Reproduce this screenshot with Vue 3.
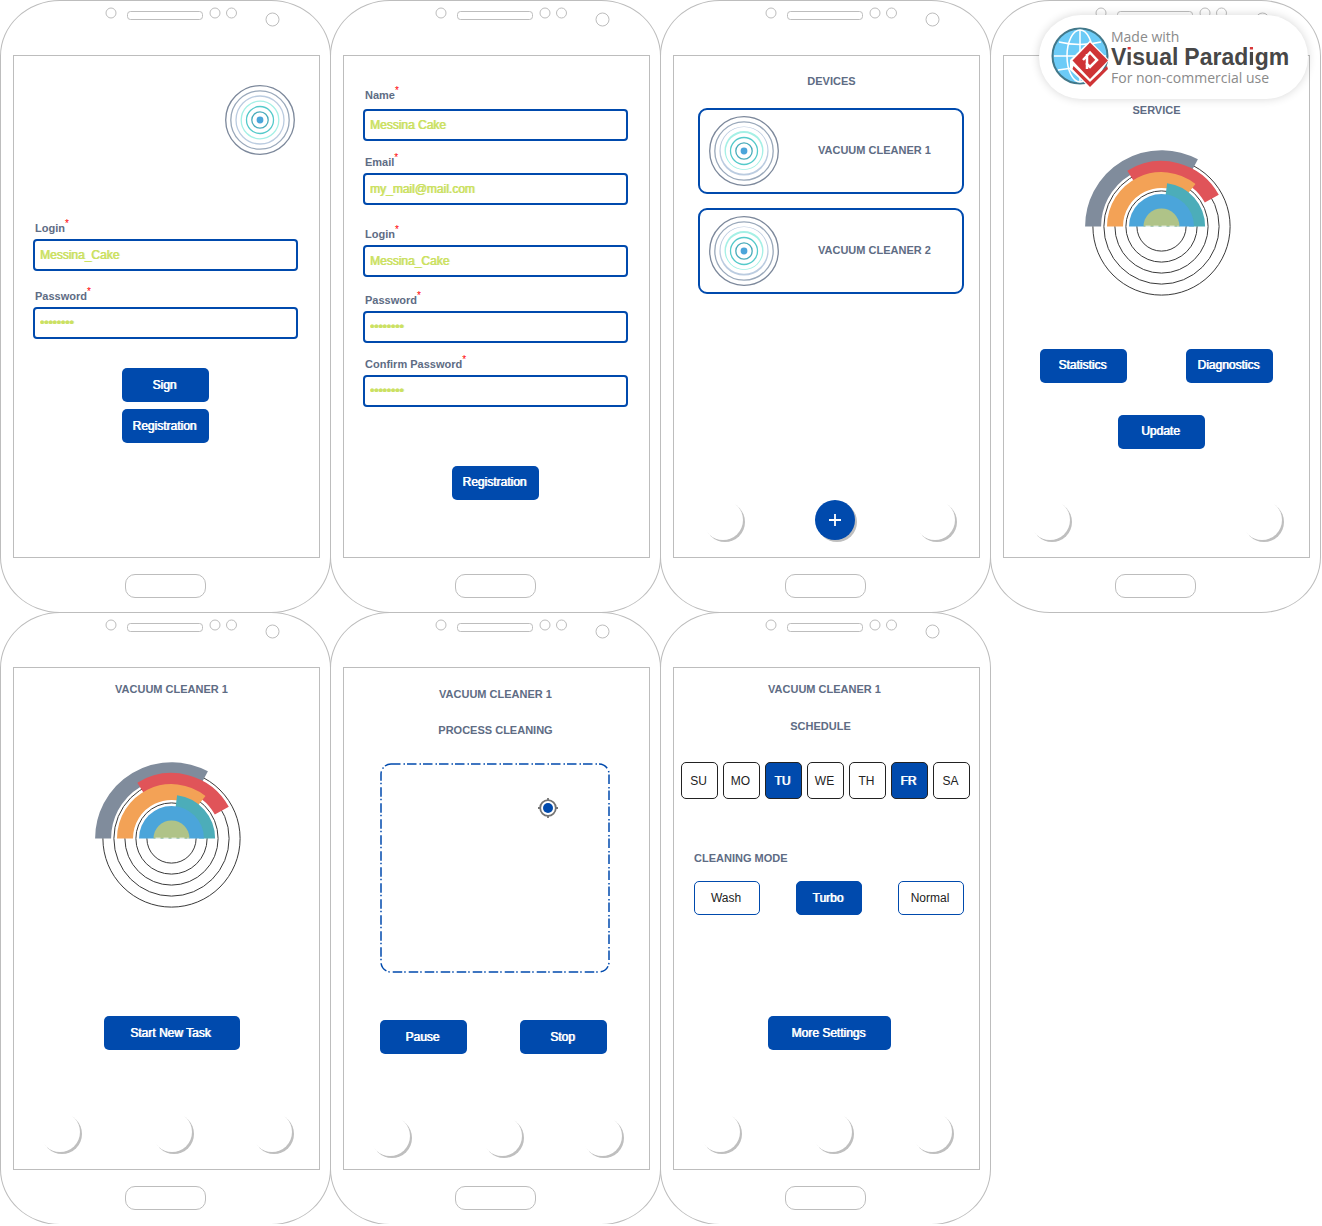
<script setup>
import { ref } from 'vue'

const signInFields = [
  { id: 'signin-login', label: 'Login', type: 'text', value: 'Messina_Cake' },
  { id: 'signin-password', label: 'Password', type: 'password', value: 'cakecake' },
]

const registrationFields = [
  { id: 'reg-name', label: 'Name', type: 'text', value: 'Messina Cake' },
  { id: 'reg-email', label: 'Email', type: 'email', value: 'my_mail@mail.com' },
  { id: 'reg-login', label: 'Login', type: 'text', value: 'Messina_Cake' },
  { id: 'reg-password', label: 'Password', type: 'password', value: 'cakecake' },
  { id: 'reg-confirm', label: 'Confirm Password', type: 'password', value: 'cakecake' },
]

const devices = ['VACUUM CLEANER 1', 'VACUUM CLEANER 2']

const phones = ['signin', 'register', 'devices', 'service', 'cleaner', 'process', 'schedule']

const days = ref([
  { name: 'SU', on: false },
  { name: 'MO', on: false },
  { name: 'TU', on: true },
  { name: 'WE', on: false },
  { name: 'TH', on: false },
  { name: 'FR', on: true },
  { name: 'SA', on: false },
])

const modes = ['Wash', 'Turbo', 'Normal']
const mode = ref('Turbo')
</script>

<template>
  <svg class="defs" width="0" height="0" aria-hidden="true">
    <symbol id="emblem" viewBox="-35 -35 70 70">
      <g fill="none" stroke-width="1.300">
        <circle r="34.300" stroke="#7c889b" />
        <circle r="29.200" stroke="#99a8ba" />
        <circle r="24" stroke="#bbcce0" />
        <circle r="18.800" stroke="#a5f0e6" />
        <circle r="13.500" stroke="#55caca" />
        <circle r="8.200" stroke="#4aacbb" />
      </g>
      <circle r="3.400" fill="#4ba5da" />
    </symbol>
    <symbol id="emblem-device" viewBox="-35 -35 70 70">
      <g fill="none" stroke-width="1.300">
        <circle r="34.300" stroke="#7c889b" />
        <circle r="29.200" stroke="#99a8ba" />
        <circle r="13.500" stroke="#55caca" />
        <circle r="8.200" stroke="#4aacbb" />
      </g>
      <path fill="#bbcce0" fill-rule="evenodd" d="M-24.600 0a24.600 24.600 0 1 0 49.200 0a24.600 24.600 0 1 0 -49.200 0M-23.400 -.700a23.400 23.400 0 1 0 46.800 0a23.400 23.400 0 1 0 -46.800 0" />
      <path fill="#a5f0e6" fill-rule="evenodd" d="M-19.500 -.600a19.500 19.500 0 1 0 39 0a19.500 19.500 0 1 0 -39 0M-18.100 .100a18.100 18.100 0 1 0 36.200 0a18.100 18.100 0 1 0 -36.200 0" />
      <circle r="3.400" fill="#4ba5da" />
    </symbol>
    <symbol id="rings" viewBox="-76.500 -76.500 154 147">
      <g fill="none" stroke="#3a3a3a" stroke-width="1">
        <circle r="68.600" />
        <circle r="57.600" />
        <circle r="46.600" />
        <circle r="35.600" />
        <circle r="24.600" />
      </g>
      <g fill="none" stroke-width="16">
        <path stroke="#808c9c" d="M-68.400 0A68.400 68.400 0 0 1 32.600 -60.100" />
        <path stroke="#e05459" d="M-30 -49A57.500 57.500 0 0 1 50.300 -27.900" />
        <path stroke="#f3a256" d="M-46.500 0A46.500 46.500 0 0 1 29 -36.300" />
        <path stroke="#4cadb9" d="M4.600 -35.300A35.600 35.600 0 0 1 35.600 0" />
      </g>
      <path fill="#4ba5da" d="M-32.500 0A32.500 32.500 0 0 1 32.500 0Z" />
      <path fill="#afc388" d="M-18 0A18 18 0 0 1 18 0Z" />
      <path stroke="#fff" stroke-dasharray="5 3" d="M-16 -.300H17" />
    </symbol>
  </svg>

  <main class="board">
    <article v-for="phone in phones" :key="phone" class="phone">
      <svg class="sensors" viewBox="0 0 329 54" aria-hidden="true">
        <g fill="#fff" stroke="#bdbdbd">
          <circle cx="110" cy="12" r="5" />
          <rect x="126.500" y="10.500" width="75" height="8" rx="3" />
          <circle cx="214" cy="12" r="5" />
          <circle cx="230.500" cy="12" r="5" />
          <circle cx="271.500" cy="18.500" r="6.500" />
        </g>
      </svg>

      <section class="screen" :class="phone">
        <template v-if="phone === 'signin'">
          <svg class="emblem"><use href="#emblem" /></svg>
          <form class="form" @submit.prevent>
            <div v-for="field in signInFields" :key="field.id" class="field">
              <label :for="field.id">{{ field.label }}<sup>*</sup></label>
              <input :id="field.id" v-model="field.value" :type="field.type" autocomplete="off" />
            </div>
            <button class="btn">Sign</button>
            <button class="btn" type="button">Registration</button>
          </form>
        </template>

        <template v-else-if="phone === 'register'">
          <form class="form" @submit.prevent>
            <div v-for="field in registrationFields" :key="field.id" class="field">
              <label :for="field.id">{{ field.label }}<sup>*</sup></label>
              <input :id="field.id" v-model="field.value" :type="field.type" autocomplete="off" />
            </div>
            <button class="btn">Registration</button>
          </form>
        </template>

        <template v-else-if="phone === 'devices'">
          <h2 class="right">DEVICES</h2>
          <div class="cards">
            <a v-for="device in devices" :key="device" class="card" href="#">
              <svg class="emblem"><use href="#emblem-device" /></svg>
              <span>{{ device }}</span>
            </a>
          </div>
          <nav class="dock">
            <button aria-label="Back"></button>
            <button class="add" aria-label="Add device">
              <svg width="12" height="12" viewBox="0 0 12 12"><path stroke="#fff" stroke-width="1.800" d="M6 0V12M0 6H12" /></svg>
            </button>
            <button aria-label="Menu"></button>
          </nav>
        </template>

        <template v-else-if="phone === 'service'">
          <h2>SERVICE</h2>
          <div class="right"><svg class="rings"><use href="#rings" /></svg></div>
          <div class="pair">
            <button class="btn">Statistics</button>
            <button class="btn">Diagnostics</button>
          </div>
          <div class="right update"><button class="btn">Update</button></div>
          <nav class="dock two">
            <button aria-label="Back"></button>
            <button aria-label="Menu"></button>
          </nav>
        </template>

        <template v-else-if="phone === 'cleaner'">
          <h2 class="right">VACUUM CLEANER 1</h2>
          <div class="right"><svg class="rings"><use href="#rings" /></svg></div>
          <div class="right"><button class="btn start">Start New Task</button></div>
          <nav class="dock">
            <button aria-label="Back"></button>
            <button aria-label="Home"></button>
            <button aria-label="Menu"></button>
          </nav>
        </template>

        <template v-else-if="phone === 'process'">
          <h2>VACUUM CLEANER 1</h2>
          <h2>PROCESS CLEANING</h2>
          <svg class="map" viewBox="0 0 230 210">
            <rect x="1" y="1" width="228" height="208" rx="10" fill="none" stroke="#004aad" stroke-width="1.500" stroke-dasharray="9.500 3 1.500 2" />
            <g fill="none" stroke="#737373" stroke-width="1.800">
              <circle cx="168" cy="45" r="7.800" />
              <path d="M168 35v3M168 52v3M158 45h3M175 45h3" />
            </g>
            <circle cx="168" cy="45" r="5" fill="#004aad" />
          </svg>
          <div class="pair">
            <button class="btn">Pause</button>
            <button class="btn">Stop</button>
          </div>
          <nav class="dock">
            <button aria-label="Back"></button>
            <button aria-label="Home"></button>
            <button aria-label="Menu"></button>
          </nav>
        </template>

        <template v-else>
          <h2>VACUUM CLEANER 1</h2>
          <h2>SCHEDULE</h2>
          <div class="days">
            <button v-for="day in days" :key="day.name" :class="{ on: day.on }" :aria-pressed="day.on" @click="day.on = !day.on">{{ day.name }}</button>
          </div>
          <h3>CLEANING MODE</h3>
          <div class="modes">
            <button v-for="item in modes" :key="item" :class="{ on: item === mode }" :aria-pressed="item === mode" @click="mode = item">{{ item }}</button>
          </div>
          <button class="btn more">More Settings</button>
          <nav class="dock">
            <button aria-label="Back"></button>
            <button aria-label="Home"></button>
            <button aria-label="Menu"></button>
          </nav>
        </template>
      </section>

      <div class="home"></div>
    </article>

    <aside class="badge">
      <svg class="logo" width="60" height="62" viewBox="0 0 60 62" aria-hidden="true">
        <circle cx="30" cy="30" r="27.500" fill="#6ccbf7" stroke="#42788a" stroke-width="2" />
        <g fill="none" stroke="#fff" stroke-width="1.500">
          <ellipse cx="30" cy="30" rx="13" ry="26" />
          <path d="M30 4V56M4 30H56M9 16Q30 21 51 16M8 44Q30 40 52 44" />
        </g>
        <path d="M40 14.500L59 34L40 62L20 44L20 34Z" fill="#fff" />
        <path d="M40 16.500L58 34.500L40 53L22.500 34.500Z" fill="#cf3436" />
        <path d="M22.500 43L40 61L58 43L57 40L40 56L23.500 40Z" fill="#cf3436" />
        <path d="M33 34L40 26.500L47 34L40 41L36 37M37 28V43" fill="none" stroke="#fff" stroke-width="2.500" />
      </svg>
      <div class="credit">
        <span>Made with</span>
        <strong><b>V<i>i</i>sual</b><b>Parad<i>i</i>gm</b></strong>
        <span>For non-commercial use</span>
      </div>
    </aside>
  </main>
</template>

<style>
body {
  margin: 0;
  background: #fff;
}
</style>

<style scoped>
.defs {
  position: absolute;
}

.board {
  position: relative;
  display: grid;
  grid-template-columns: repeat(auto-fill, 330px);
  grid-auto-rows: 612px;
  color: #5e6c84;
  font-family: "Liberation Sans", Arial, sans-serif;
  font-size: 12px;
}

.phone {
  display: flex;
  flex-direction: column;
  box-sizing: border-box;
  width: 331px;
  height: 613px;
  border: 1px solid #bdbdbd;
  border-radius: 60px / 56px;
}

.sensors {
  display: block;
  height: 54px;
}

.screen {
  display: flex;
  flex-direction: column;
  box-sizing: border-box;
  height: 503px;
  margin: 0 10px 0 12px;
  border: 1px solid #bdbdbd;
}

.home {
  box-sizing: border-box;
  width: 81px;
  height: 24px;
  margin: 16px auto 0;
  border: 1px solid #bdbdbd;
  border-radius: 10px;
}

button {
  padding: 0;
  border: 0;
  font: inherit;
  cursor: pointer;
}

h2,
h3 {
  margin: 0;
  font-size: 11px;
  line-height: 14px;
  text-align: center;
}

.right {
  padding-left: 10px;
  text-align: center;
}

.btn {
  width: 87px;
  height: 34px;
  padding-right: 2px;
  border-radius: 5px;
  background: #004aad;
  color: #fff;
  text-shadow: 0 0 0 #fff, 1px 0 0 rgba(255, 255, 255, 0.5);
}

.service .btn,
.register .btn {
  padding-bottom: 2px;
}

.emblem {
  display: block;
  flex: none;
  width: 70px;
  height: 70px;
}

.rings {
  display: block;
  width: 154px;
  height: 147px;
  margin: 0 auto;
}

.form {
  display: flex;
  flex-direction: column;
  padding: 0 21px 0 19px;
}

.form .btn {
  align-self: center;
}

.field {
  display: flex;
  flex-direction: column;
  gap: 4px;
}

.field label {
  padding-left: 2px;
  font-size: 11px;
  font-weight: bold;
  line-height: 14px;
}

.field sup {
  color: #f00;
  font-size: 10px;
  font-weight: normal;
  line-height: 0;
  vertical-align: 5px;
}

.field input {
  box-sizing: border-box;
  width: 100%;
  height: 32px;
  padding: 0 5px;
  border: 2px solid #004aad;
  border-radius: 4px;
  outline: 0;
  background: #fff;
  color: #cbe162;
  font: inherit;
  text-shadow: 0 0 0 #cbe162, 1px 0 0 rgba(203, 225, 98, 0.5);
}

.signin .emblem {
  align-self: flex-end;
  margin: 29px 24px 66px 0;
}

.signin .field + .field {
  margin-top: 18px;
}

.signin .btn {
  margin-top: 7px;
}

.signin .field + .btn {
  margin-top: 29px;
}

.register .form {
  padding-top: 32px;
}

.register .field {
  margin-bottom: 14px;
}

.register .field:first-child {
  gap: 7px;
}

.register .field:nth-child(2) {
  margin-bottom: 22px;
}

.register .field:nth-child(3) {
  margin-bottom: 16px;
}

.register .btn {
  margin-top: 45px;
}

.devices h2 {
  margin-top: 18px;
}

.cards {
  display: flex;
  flex-direction: column;
  gap: 14px;
  padding: 20px 15px 0 24px;
}

.card {
  display: flex;
  align-items: center;
  gap: 39px;
  box-sizing: border-box;
  height: 86px;
  padding: 0 9px;
  border: 2px solid #004aad;
  border-radius: 9px;
  color: inherit;
  font-size: 11px;
  font-weight: bold;
  text-decoration: none;
}

.card span {
  padding-bottom: 2px;
}

.dock {
  display: flex;
  margin-top: auto;
  padding: 0 0 17px 26px;
}

.devices .dock {
  padding-left: 29px;
}

.process .dock {
  padding-bottom: 13px;
}

.dock button {
  width: 40px;
  height: 40px;
  border-radius: 50%;
  background: #fff;
  box-shadow: 2px 2px 0 #bfbfbf;
}

.dock .add {
  display: grid;
  place-items: center;
  background: #004aad;
}

.dock button:nth-child(2) {
  margin-left: 72px;
}

.dock button:nth-child(3) {
  margin-left: 60px;
}

.dock.two button:nth-child(2) {
  margin-left: 172px;
}

.pair {
  display: flex;
  justify-content: space-between;
  padding: 52px 36px 0;
}

.service h2 {
  margin: 47px 0 33px;
}

.update {
  margin-top: 32px;
}

.cleaner h2 {
  margin: 14px 0 66px;
}

.start {
  width: 136px;
  margin-top: 107px;
}

.process h2 {
  margin-top: 19px;
  padding-right: 2px;
}

.process h2 + h2 {
  margin-top: 22px;
}

.map {
  width: 230px;
  height: 210px;
  margin: 26px 0 0 36px;
}

.process .pair {
  justify-content: flex-start;
  gap: 53px;
  padding-top: 47px;
}

.schedule h2 {
  margin-top: 14px;
  padding-right: 4px;
}

.schedule h2 + h2 {
  margin-top: 23px;
  padding-right: 12px;
}

.schedule h3 {
  margin-top: 52px;
  padding-left: 20px;
  text-align: left;
}

.days {
  display: flex;
  gap: 5px;
  padding: 29px 0 0 7px;
}

.days button,
.modes button {
  box-sizing: border-box;
  width: 37px;
  height: 37px;
  padding-right: 2px;
  border: 1px solid #222;
  border-radius: 5px;
  background: #fff;
  color: #222;
}

.modes {
  display: flex;
  gap: 36px;
  padding: 16px 0 0 20px;
}

.modes button {
  width: 66px;
  height: 34px;
  border-color: #004aad;
}

.days .on,
.modes .on {
  background: #004aad;
  color: #fff;
  text-shadow: 0 0 0 #fff, 1px 0 0 rgba(255, 255, 255, 0.5);
}

.more {
  width: 123px;
  margin: 101px 0 0 94px;
}

.badge {
  position: absolute;
  top: 15px;
  right: 14px;
  display: flex;
  align-items: center;
  gap: 1px;
  box-sizing: border-box;
  width: 269px;
  height: 84px;
  padding-left: 11px;
  border-radius: 42px;
  background: #fff;
  box-shadow: 0 0 10px rgba(0, 0, 0, 0.16);
}

.credit {
  display: flex;
  flex-direction: column;
  color: #8a8a8a;
  font-family: "Open Sans", sans-serif;
  font-size: 14px;
  line-height: 19px;
  white-space: nowrap;
}

.credit strong {
  display: flex;
  gap: 6px;
  color: #474747;
  font-family: "Liberation Sans", Arial, sans-serif;
  font-size: 23px;
  line-height: 22px;
}

.credit i {
  background: linear-gradient(#d8383a 7px, #474747 7px);
  background-clip: text;
  color: transparent;
  font-style: normal;
}
</style>
